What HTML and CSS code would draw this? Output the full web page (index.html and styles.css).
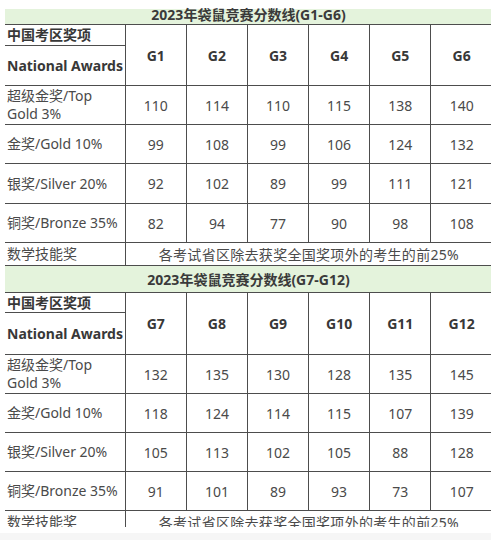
FILE: index.html
```html
<!DOCTYPE html>
<html>
<head>
    <meta charset="utf-8">
    <title>2023年袋鼠竞赛分数线</title>
    <link rel="stylesheet" href="styles.css">
</head>
<body>
    <div class="sheet">
        <table class="scores">
            <colgroup>
                <col class="col-label">
                <col class="col-grade"><col class="col-grade"><col class="col-grade">
                <col class="col-grade"><col class="col-grade"><col class="col-grade">
            </colgroup>

            <!-- G1 - G6 -->
            <tr class="title-row first">
                <th colspan="7" class="title">2023年袋鼠竞赛分数线(G1-G6)</th>
            </tr>
            <tr class="head-a">
                <th class="label head">中国考区奖项</th>
                <th rowspan="2" class="grade">G1</th>
                <th rowspan="2" class="grade">G2</th>
                <th rowspan="2" class="grade">G3</th>
                <th rowspan="2" class="grade">G4</th>
                <th rowspan="2" class="grade">G5</th>
                <th rowspan="2" class="grade">G6</th>
            </tr>
            <tr class="head-b">
                <th class="label head">National Awards</th>
            </tr>
            <tr class="row">
                <td class="label">超级金奖/Top<br>Gold 3%</td>
                <td>110</td><td>114</td><td>110</td><td>115</td><td>138</td><td>140</td>
            </tr>
            <tr class="row">
                <td class="label">金奖/Gold 10%</td>
                <td>99</td><td>108</td><td>99</td><td>106</td><td>124</td><td>132</td>
            </tr>
            <tr class="row tall">
                <td class="label">银奖/Silver 20%</td>
                <td>92</td><td>102</td><td>89</td><td>99</td><td>111</td><td>121</td>
            </tr>
            <tr class="row">
                <td class="label">铜奖/Bronze 35%</td>
                <td>82</td><td>94</td><td>77</td><td>90</td><td>98</td><td>108</td>
            </tr>
            <tr class="skill">
                <td class="label">数学技能奖</td>
                <td colspan="6" class="note">各考试省区除去获奖全国奖项外的考生的前25%</td>
            </tr>

            <!-- G7 - G12 -->
            <tr class="title-row">
                <th colspan="7" class="title">2023年袋鼠竞赛分数线(G7-G12)</th>
            </tr>
            <tr class="head-a second">
                <th class="label head">中国考区奖项</th>
                <th rowspan="2" class="grade">G7</th>
                <th rowspan="2" class="grade">G8</th>
                <th rowspan="2" class="grade">G9</th>
                <th rowspan="2" class="grade">G10</th>
                <th rowspan="2" class="grade">G11</th>
                <th rowspan="2" class="grade">G12</th>
            </tr>
            <tr class="head-b second">
                <th class="label head">National Awards</th>
            </tr>
            <tr class="row">
                <td class="label">超级金奖/Top<br>Gold 3%</td>
                <td>132</td><td>135</td><td>130</td><td>128</td><td>135</td><td>145</td>
            </tr>
            <tr class="row">
                <td class="label">金奖/Gold 10%</td>
                <td>118</td><td>124</td><td>114</td><td>115</td><td>107</td><td>139</td>
            </tr>
            <tr class="row">
                <td class="label">银奖/Silver 20%</td>
                <td>105</td><td>113</td><td>102</td><td>105</td><td>88</td><td>128</td>
            </tr>
            <tr class="row">
                <td class="label">铜奖/Bronze 35%</td>
                <td>91</td><td>101</td><td>89</td><td>93</td><td>73</td><td>107</td>
            </tr>
            <tr class="skill">
                <td class="label">数学技能奖</td>
                <td colspan="6" class="note">各考试省区除去获奖全国奖项外的考生的前25%</td>
            </tr>
        </table>
    </div>
    <div class="footer"></div>
</body>
</html>
```

FILE: styles.css
```css
body {
    margin: 0;
    background-color: white;
    font-family: "Noto Sans", "Noto Sans CJK SC", sans-serif;
    color: #4a4a4a;
}

.sheet {
    height: 527px;
    overflow: hidden;
    padding: 9px 0 0 5px;
    box-sizing: border-box;
    width: 491px;
}

.scores {
    border-collapse: collapse;
    table-layout: fixed;
    width: 487px;
    font-size: 14px;
}

.col-label {
    width: 120px;
}

.col-grade {
    width: 61px;
}

th, td {
    border: 1px solid #4d4d4d;
    padding: 0;
    text-align: center;
    vertical-align: middle;
    font-weight: normal;
}

/* left edge and right edge have no outer border */
tr > :first-child {
    border-left: none;
}

tr > :last-child {
    border-right: none;
}

.title {
    background-color: #e4f3dc;
    border-left: none;
    border-right: none;
    border-top: none;
    font-weight: bold;
    color: #3a3a3a;
    font-size: 14px;
}

.title-row th {
    height: 26px;
}

.title-row.first th {
    height: 15px;
    line-height: 12px;
    vertical-align: top;
    padding-top: 0;
}

.head-a th {
    height: 20px;
}

.head-b th {
    height: 39px;
}

.head-a.second th.label {
    height: 19px;
}

.head-b.second th {
    height: 41px;
}

.label {
    text-align: left;
    padding-left: 2px;
    line-height: 18px;
    white-space: nowrap;
}

.head {
    font-weight: bold;
    color: #383838;
}

.grade {
    font-weight: bold;
    color: #383838;
}

.row td {
    height: 38px;
}

.row.tall td {
    height: 39px;
}

.skill td {
    height: 22px;
}

.note {
    letter-spacing: 0.3px;
}

.footer {
    height: 7px;
    margin-top: 6px;
    background-color: #f6f6f6;
}
```
